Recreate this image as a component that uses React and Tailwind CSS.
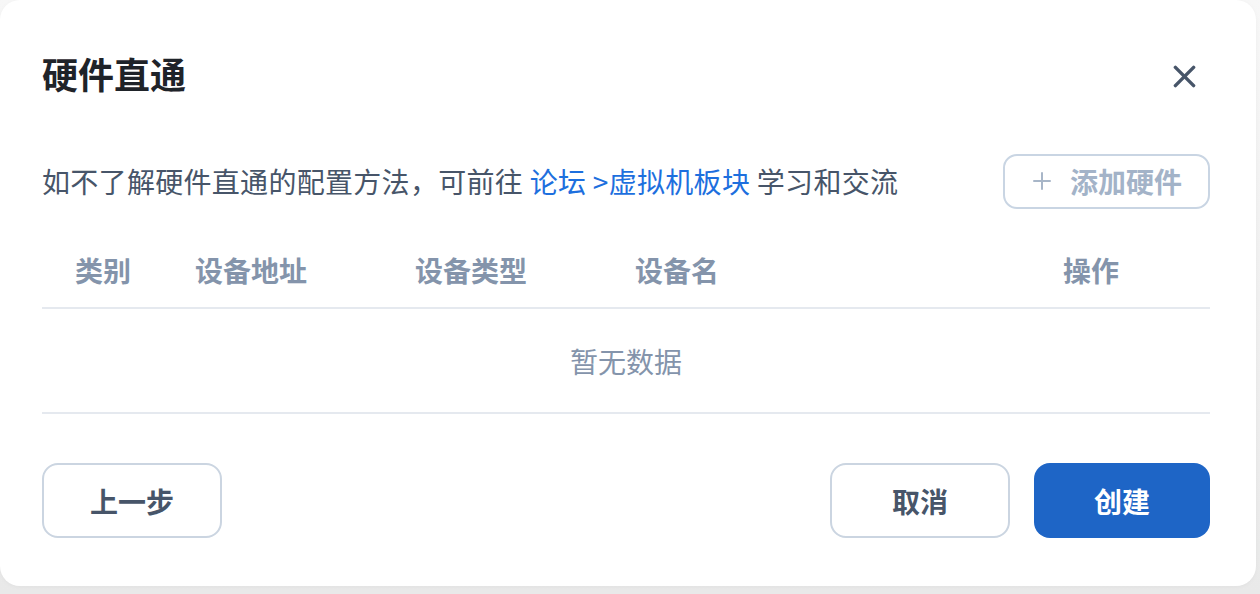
export default function App() {
  const font = { fontFamily: '"Noto Sans CJK SC", "Noto Sans", sans-serif' };
  return (
    <div className="w-[1260px] h-[594px] bg-gradient-to-b from-[#f7f7f7] to-[#e9e9e9] overflow-hidden" style={font}>
      <div className="w-[1256px] h-[586px] bg-white rounded-[20px] pl-[42px] pr-[46px] flex flex-col shadow-[0_1px_4px_rgba(0,0,0,0.04)]">
        <div className="mt-[51px] h-[44px] flex items-center justify-between">
          <h1 className="text-[36px] leading-[44px] font-bold text-[#1f2329]">硬件直通</h1>
          <button className="w-[48px] h-[48px] flex items-center justify-center mr-[2px] mt-[7px]">
            <svg width="23" height="23" viewBox="0 0 24 24" fill="none" stroke="#475569" strokeWidth="3.6" strokeLinecap="round">
              <line x1="2.5" y1="2.5" x2="21.5" y2="21.5" />
              <line x1="21.5" y1="2.5" x2="2.5" y2="21.5" />
            </svg>
          </button>
        </div>
        <div className="mt-[59px] h-[54px] flex items-center justify-between">
          <p className="text-[28px] leading-[40px] text-[#475569] whitespace-nowrap tracking-[0.3px]">
            如不了解硬件直通的配置方法，可前往 <span className="text-[#1d6fde]">论坛 &gt;虚拟机板块</span> 学习和交流
          </p>
          <button className="w-[207px] h-[55px] border-2 border-[#c9d5e3] rounded-[14px] flex items-center pl-[27px] text-[#a3b3c8]">
            <svg width="20" height="20" viewBox="0 0 20 20" stroke="#a8b6c8" strokeWidth="2" strokeLinecap="round">
              <line x1="10" y1="2" x2="10" y2="18" />
              <line x1="2" y1="10" x2="18" y2="10" />
            </svg>
            <span className="ml-[18px] text-[28px] leading-[40px] font-bold">添加硬件</span>
          </button>
        </div>
        <div className="mt-[24px]">
          <div className="h-[77px] border-b-2 border-[#e5e9ef] flex items-center pl-[33px] text-[28px] font-bold text-[#8494ab]">
            <div className="w-[120px]">类别</div>
            <div className="w-[220px]">设备地址</div>
            <div className="w-[220px]">设备类型</div>
            <div className="flex-1">设备名</div>
            <div className="w-[147px]">操作</div>
          </div>
          <div className="h-[105px] border-b-2 border-[#e5e9ef] flex items-center justify-center text-[28px] text-[#8494ab]">
            暂无数据
          </div>
        </div>
        <div className="mt-[49px] flex items-center">
          <button className="w-[180px] h-[75px] border-2 border-[#cbd5e1] rounded-[16px] text-[28px] font-bold text-[#475569]">上一步</button>
          <div className="flex-1" />
          <button className="w-[180px] h-[75px] border-2 border-[#cbd5e1] rounded-[16px] text-[28px] font-bold text-[#475569]">取消</button>
          <button className="ml-[24px] w-[176px] h-[75px] bg-[#1e65c6] rounded-[16px] text-[28px] font-bold text-white">创建</button>
        </div>
      </div>
    </div>
  );
}
